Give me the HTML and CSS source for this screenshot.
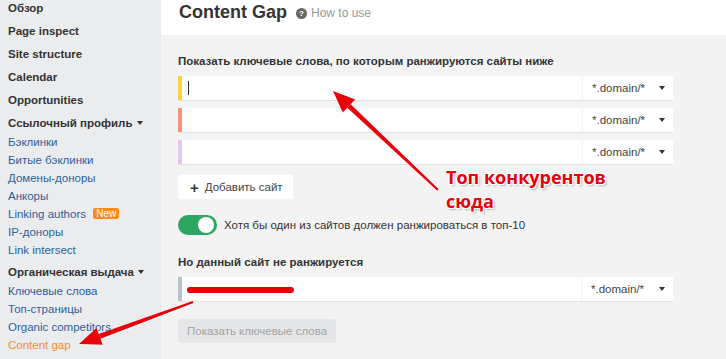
FILE: index.html
```html
<!DOCTYPE html>
<html>
<head lang="ru">
    <meta charset="UTF-8">
    <title>Content Gap</title>
    <link rel="stylesheet" href="styles.css">
</head>
<body>
<div class="page">
    <div class="sidebar">
        <ul class="nav">
            <li class="nav-title">Обзор</li>
            <li class="nav-title">Page inspect</li>
            <li class="nav-title">Site structure</li>
            <li class="nav-title">Calendar</li>
            <li class="nav-title">Opportunities</li>
        </ul>
        <div class="nav-group first">
            <div class="group-title">Ссылочный профиль <span class="caret"></span></div>
            <a class="nav-link">Бэклинки</a>
            <a class="nav-link">Битые бэклинки</a>
            <a class="nav-link">Домены-доноры</a>
            <a class="nav-link">Анкоры</a>
            <a class="nav-link">Linking authors <span class="badge">New</span></a>
            <a class="nav-link">IP-доноры</a>
            <a class="nav-link">Link intersect</a>
        </div>
        <div class="nav-group">
            <div class="group-title">Органическая выдача <span class="caret"></span></div>
            <a class="nav-link">Ключевые слова</a>
            <a class="nav-link">Топ-страницы</a>
            <a class="nav-link">Organic competitors</a>
            <a class="nav-link active">Content gap</a>
        </div>
    </div>

    <div class="main">
        <div class="header">
            <h1>Content Gap</h1>
            <span class="help-icon">?</span>
            <span class="help-link">How to use</span>
        </div>
        <div class="panel">
            <div class="label">Показать ключевые слова, по которым ранжируются сайты ниже</div>
            <div class="site-row c-yellow">
                <div class="site-input"><span class="cursor"></span></div>
                <div class="mode">*.domain/* <span class="caret dark"></span></div>
            </div>
            <div class="site-row c-salmon">
                <div class="site-input"></div>
                <div class="mode">*.domain/* <span class="caret dark"></span></div>
            </div>
            <div class="site-row c-lilac">
                <div class="site-input"></div>
                <div class="mode">*.domain/* <span class="caret dark"></span></div>
            </div>
            <div class="add-btn"><span class="plus">+</span> Добавить сайт</div>

            <div class="toggle-line">
                <span class="toggle"><span class="knob"></span></span>
                <span>Хотя бы один из сайтов должен ранжироваться в топ-10</span>
            </div>

            <div class="label second">Но данный сайт не ранжируется</div>
            <div class="site-row c-grey">
                <div class="site-input"><span class="scribble"></span></div>
                <div class="mode">*.domain/* <span class="caret dark"></span></div>
            </div>
            <div class="show-btn">Показать ключевые слова</div>
        </div>
    </div>
</div>

<!-- annotation layer -->
<svg class="marks" width="726" height="359" viewBox="0 0 726 359">
    <g fill="#e8000b">
        <polygon points="438.7,189.3 437.3,190.7 347.3,107.8 350.7,104.2"/>
        <polygon points="333,91 355.2,99.4 342.8,112.6"/>
        <polygon points="192.7,301.1 193.3,302.9 100.5,338.7 98.7,334"/>
        <polygon points="79,344 96.5,328 102.7,344.8"/>
    </g>
</svg>
<div class="note">Топ конкурентов<br>сюда</div>
</body>
</html>
```

FILE: styles.css
```css
* {
    margin: 0;
    padding: 0;
    box-sizing: border-box;
}

body {
    font-family: "Liberation Sans", Arial, sans-serif;
    font-size: 11.5px;
    color: #333;
    background: #f3f3f3;
    overflow: hidden;
}

.page {
    display: flex;
    width: 726px;
    height: 359px;
}

/* sidebar */
.sidebar {
    width: 161px;
    flex-shrink: 0;
    background: #ebecee;
    padding-left: 8px;
}

.nav {
    list-style: none;
    margin-top: -3px;
}

.nav-title {
    font-weight: bold;
    line-height: 23px;
}

.nav-group {
    margin-top: 3px;
}

.nav-group.first {
    margin-top: 1px;
}

.group-title {
    font-weight: bold;
    line-height: 20px;
}

.caret {
    display: inline-block;
    width: 0;
    height: 0;
    border-left: 3.5px solid transparent;
    border-right: 3.5px solid transparent;
    border-top: 4px solid #333;
    vertical-align: 2px;
    margin-left: 1px;
}

.nav-link {
    display: block;
    line-height: 18px;
    color: #2e5f9d;
}

.nav-link.active {
    color: #f58b2c;
}

.badge {
    display: inline-block;
    background: #ff8a1c;
    color: #fff;
    font-size: 10px;
    line-height: 11px;
    padding: 0 3px;
    border-radius: 2px;
    margin-left: 4px;
    vertical-align: 1px;
}

/* main */
.main {
    flex: 1;
    display: flex;
    flex-direction: column;
}

.header {
    height: 35px;
    background: #fff;
    display: flex;
    align-items: center;
    padding: 0 0 11px 18px;
}

.header h1 {
    font-size: 18px;
    font-weight: bold;
    color: #333;
}

.help-icon {
    width: 11px;
    height: 11px;
    border-radius: 50%;
    background: #666;
    color: #fff;
    font-size: 8px;
    font-weight: bold;
    line-height: 11px;
    text-align: center;
    margin: 2px 4px 0 9px;
}

.help-link {
    color: #999;
    font-size: 12px;
    margin-top: 2px;
}

.panel {
    flex: 1;
    background: #f3f3f3;
    padding: 18px 0 0 17px;
}

.label {
    font-weight: bold;
    line-height: 16px;
    margin-bottom: 7px;
}

.label.second {
    margin-top: 19px;
    margin-bottom: 7px;
}

.site-row {
    display: flex;
    width: 495px;
    height: 24px;
    margin-bottom: 8px;
    border-left: 4px solid #ccc;
    box-shadow: 0 1px 0 #e2e2e2;
}

.c-yellow { border-left-color: #f9d13c; }
.c-salmon { border-left-color: #f7937a; }
.c-lilac { border-left-color: #e4c8ee; }
.c-grey { border-left-color: #b7c3ca; }

.site-input {
    flex: 1;
    background: #fff;
    display: flex;
    align-items: center;
    padding-left: 6px;
}

.cursor {
    width: 1px;
    height: 14px;
    background: #333;
}

.scribble {
    width: 107px;
    height: 6px;
    border-radius: 3px;
    background: #e8000b;
    margin-left: -1px;
    margin-top: 1px;
}

.mode {
    width: 90px;
    margin-left: 1px;
    background: #fff;
    display: flex;
    align-items: center;
    justify-content: space-between;
    padding: 0 8px 0 9px;
    color: #444;
}

.caret.dark {
    border-top-color: #333;
    margin-left: 0;
    vertical-align: 0;
}

.site-row.c-grey .mode {
    width: 91px;
}

.add-btn {
    display: inline-flex;
    align-items: center;
    height: 24px;
    width: 115px;
    background: #fff;
    border-radius: 3px;
    padding-left: 12px;
    margin-top: 3px;
    color: #444;
}

.plus {
    font-size: 15px;
    font-weight: bold;
    margin-right: 6px;
    color: #333;
}

.toggle-line {
    display: flex;
    align-items: center;
    gap: 7px;
    margin-top: 16px;
    height: 20px;
}

.toggle {
    width: 39px;
    height: 20px;
    border-radius: 10px;
    background: #2da662;
    display: flex;
    align-items: center;
    justify-content: flex-end;
    padding-right: 3px;
}

.knob {
    width: 16px;
    height: 16px;
    border-radius: 50%;
    background: #fff;
}

.show-btn {
    display: inline-flex;
    align-items: center;
    height: 24px;
    padding: 0 9px;
    background: #e5e6e7;
    border-radius: 3px;
    color: #a3a3a3;
    margin-top: 10px;
}

/* annotation */
.marks {
    position: absolute;
    left: 0;
    top: 0;
    pointer-events: none;
    filter: drop-shadow(1px 1px 0 rgba(255, 255, 255, 0.8));
}

.note {
    position: absolute;
    left: 446px;
    top: 165px;
    font-family: "Open Sans", "Liberation Sans", sans-serif;
    font-weight: bold;
    font-size: 18px;
    line-height: 24px;
    color: #e8000b;
    text-shadow: 1px 1px 0 #fff, -1px -1px 0 #fff, 1px -1px 0 #fff, -1px 1px 0 #fff, 2px 2px 2px rgba(0, 0, 0, 0.25);
}
```
